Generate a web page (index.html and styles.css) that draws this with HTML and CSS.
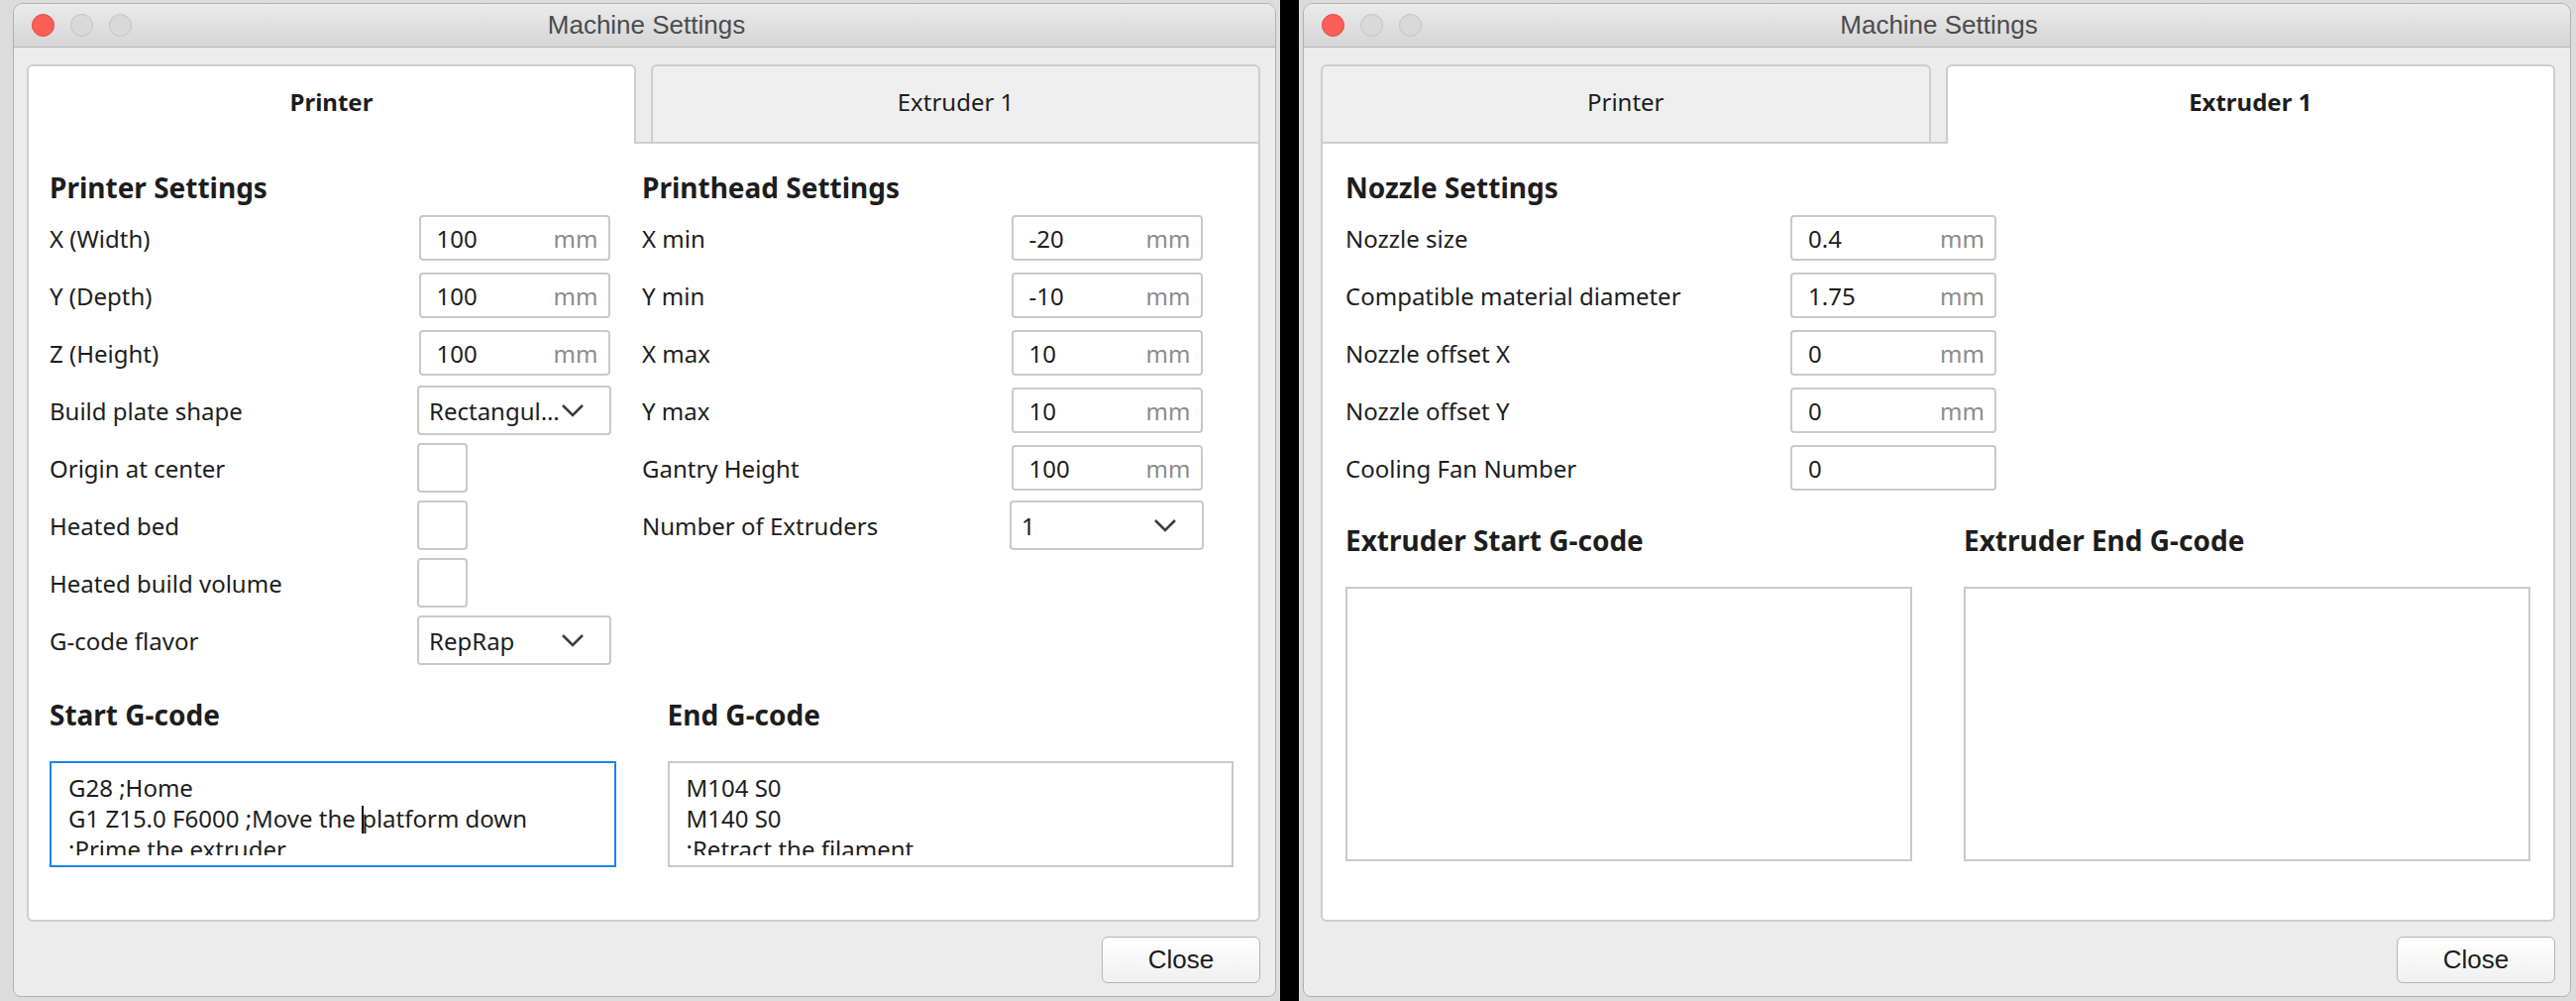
FILE: index.html
```html
<!DOCTYPE html>
<html lang="en">
<head>
  <meta charset="UTF-8" />
  <meta name="viewport" content="width=device-width, initial-scale=1.0"/>
  <title>Machine Settings</title>
  <link rel="stylesheet" href="styles.css">
</head>
<body>
  <!-- Left screenshot: Printer tab -->
  <div class="screen screen-left">
    <div class="window window-left">
      <div class="titlebar">
        <div class="lights">
          <span class="light light-close"></span>
          <span class="light"></span>
          <span class="light"></span>
        </div>
        <div class="title">Machine Settings</div>
      </div>
      <div class="window-body">
        <div class="tabs">
          <div class="tab active">Printer</div>
          <div class="tab">Extruder 1</div>
        </div>
        <div class="panel">
          <div class="settings">
            <div class="column">
              <h2>Printer Settings</h2>
              <div class="row"><span>X (Width)</span><div class="control"><div class="field"><span>100</span><span class="unit">mm</span></div></div></div>
              <div class="row"><span>Y (Depth)</span><div class="control"><div class="field"><span>100</span><span class="unit">mm</span></div></div></div>
              <div class="row"><span>Z (Height)</span><div class="control"><div class="field"><span>100</span><span class="unit">mm</span></div></div></div>
              <div class="row"><span>Build plate shape</span><div class="control"><div class="combo"><span>Rectangul…</span><svg width="24" height="14" viewBox="0 0 24 14"><path d="M2 2 L12 12 L22 2" fill="none" stroke="#3d3d3d" stroke-width="2.6"/></svg></div></div></div>
              <div class="row"><span>Origin at center</span><div class="control control-check"><div class="check"></div></div></div>
              <div class="row"><span>Heated bed</span><div class="control control-check"><div class="check"></div></div></div>
              <div class="row"><span>Heated build volume</span><div class="control control-check"><div class="check"></div></div></div>
              <div class="row"><span>G-code flavor</span><div class="control"><div class="combo"><span>RepRap</span><svg width="24" height="14" viewBox="0 0 24 14"><path d="M2 2 L12 12 L22 2" fill="none" stroke="#3d3d3d" stroke-width="2.6"/></svg></div></div></div>
            </div>
            <div class="column">
              <h2>Printhead Settings</h2>
              <div class="row"><span>X min</span><div class="control"><div class="field"><span>-20</span><span class="unit">mm</span></div></div></div>
              <div class="row"><span>Y min</span><div class="control"><div class="field"><span>-10</span><span class="unit">mm</span></div></div></div>
              <div class="row"><span>X max</span><div class="control"><div class="field"><span>10</span><span class="unit">mm</span></div></div></div>
              <div class="row"><span>Y max</span><div class="control"><div class="field"><span>10</span><span class="unit">mm</span></div></div></div>
              <div class="row"><span>Gantry Height</span><div class="control"><div class="field"><span>100</span><span class="unit">mm</span></div></div></div>
              <div class="row"><span>Number of Extruders</span><div class="control"><div class="combo"><span>1</span><svg width="24" height="14" viewBox="0 0 24 14"><path d="M2 2 L12 12 L22 2" fill="none" stroke="#3d3d3d" stroke-width="2.6"/></svg></div></div></div>
            </div>
          </div>
          <div class="gcode">
            <div>
              <h2>Start G-code</h2>
              <div class="code focused"><div class="code-text">G28 ;Home
G1 Z15.0 F6000 ;Move the <span class="caret"></span>platform down
;Prime the extruder
G92 E0
G1 F200 E3
G92 E0</div></div>
            </div>
            <div>
              <h2>End G-code</h2>
              <div class="code"><div class="code-text">M104 S0
M140 S0
;Retract the filament
G92 E1
G1 E-1 F300
G28 X0 Y0
M84</div></div>
            </div>
          </div>
        </div>
        <div class="footer">
          <button class="btn">Close</button>
        </div>
      </div>
    </div>
  </div>

  <!-- Right screenshot: Extruder 1 tab -->
  <div class="screen screen-right">
    <div class="window window-right">
      <div class="titlebar">
        <div class="lights">
          <span class="light light-close"></span>
          <span class="light"></span>
          <span class="light"></span>
        </div>
        <div class="title">Machine Settings</div>
      </div>
      <div class="window-body">
        <div class="tabs">
          <div class="tab">Printer</div>
          <div class="tab active">Extruder 1</div>
        </div>
        <div class="panel">
          <div class="column column-wide">
            <h2>Nozzle Settings</h2>
            <div class="row"><span>Nozzle size</span><div class="control"><div class="field"><span>0.4</span><span class="unit">mm</span></div></div></div>
            <div class="row"><span>Compatible material diameter</span><div class="control"><div class="field"><span>1.75</span><span class="unit">mm</span></div></div></div>
            <div class="row"><span>Nozzle offset X</span><div class="control"><div class="field"><span>0</span><span class="unit">mm</span></div></div></div>
            <div class="row"><span>Nozzle offset Y</span><div class="control"><div class="field"><span>0</span><span class="unit">mm</span></div></div></div>
            <div class="row"><span>Cooling Fan Number</span><div class="control"><div class="field"><span>0</span></div></div></div>
          </div>
          <div class="gcode">
            <div>
              <h2>Extruder Start G-code</h2>
              <div class="code code-tall"></div>
            </div>
            <div>
              <h2>Extruder End G-code</h2>
              <div class="code code-tall"></div>
            </div>
          </div>
        </div>
        <div class="footer">
          <button class="btn">Close</button>
        </div>
      </div>
    </div>
  </div>
</body>
</html>
```

FILE: styles.css
```css
body {
  margin: 0;
  width: 2600px;
  height: 1010px;
  display: flex;
  overflow: hidden;
  background: #000;
  font-family: "Noto Sans", sans-serif;
  color: #1d1d1d;
}

.screen {
  height: 100%;
  background: #dcdcdc;
}

.screen-left {
  width: 1292px;
}

.screen-right {
  flex: 1;
  margin-left: 19px;
}

/* Window chrome */
.window {
  box-sizing: border-box;
  height: 1003px;
  margin-top: 3px;
  display: flex;
  flex-direction: column;
  background: #ececec;
  border: 1px solid #b1b1b1;
  border-radius: 10px 10px 8px 8px;
  overflow: hidden;
}

.window-left {
  width: 1275px;
  margin-left: 13px;
}

.window-right {
  width: 1280px;
  margin-left: 4px;
}

.titlebar {
  height: 43px;
  flex-shrink: 0;
  display: grid;
  grid-template-columns: 1fr auto 1fr;
  align-items: center;
  padding: 0 14px 0 18px;
  background: linear-gradient(#ebebeb, #d5d5d5);
  border-bottom: 1px solid #b6b6b6;
}

.lights {
  display: flex;
  gap: 16px;
}

.light {
  width: 23px;
  height: 23px;
  box-sizing: border-box;
  border-radius: 50%;
  background: #d9d9d9;
  border: 1px solid #c2c2c2;
}

.light-close {
  background: #fd5e56;
  border-color: #e2463f;
}

.title {
  font-family: "Liberation Sans", sans-serif;
  font-size: 26px;
  color: #4c4c4c;
}

.window-body {
  flex: 1;
  display: flex;
  flex-direction: column;
  padding: 17px 15px 13px 13px;
}

.window-right .window-body {
  padding-left: 17px;
}

/* Tabs */
.tabs {
  height: 78px;
  flex-shrink: 0;
  display: flex;
  align-items: flex-end;
  gap: 15px;
}

.tab {
  flex: 1;
  height: 78px;
  box-sizing: border-box;
  display: flex;
  align-items: center;
  justify-content: center;
  padding-bottom: 5px;
  border: 2px solid #cdcdcd;
  border-bottom: none;
  border-radius: 6px 6px 0 0;
  background: #efefef;
  font-size: 24px;
}

.tab.active {
  position: relative;
  z-index: 1;
  height: 80px;
  margin-bottom: -2px;
  padding-bottom: 7px;
  background: #fff;
  font-weight: 700;
}

.panel {
  flex: 1;
  background: #fff;
  border: 2px solid #cdcdcd;
  border-radius: 0 0 6px 6px;
  padding: 26px 25px 0 21px;
}

.window-right .panel {
  padding: 26px 23px 0 23px;
}

h2 {
  margin: 0;
  font-size: 28px;
  line-height: 36px;
  font-weight: 700;
}

/* Settings rows */
.settings {
  display: grid;
  grid-template-columns: 567px 567px;
  column-gap: 31px;
}

.column h2 {
  margin-bottom: 4px;
}

.column-wide {
  width: 657px;
}

.row {
  height: 58px;
  display: flex;
  align-items: center;
  justify-content: space-between;
  font-size: 24px;
}

.control {
  width: 196px;
  display: flex;
  justify-content: center;
}

.control-check {
  justify-content: flex-start;
}

.column-wide .control {
  width: 208px;
}

.field {
  width: 193px;
  height: 46px;
  box-sizing: border-box;
  display: flex;
  align-items: center;
  justify-content: space-between;
  padding: 0 10px 0 16px;
  border: 2px solid #c9c9c9;
  border-radius: 4px;
  background: #fff;
}

.column-wide .field {
  width: 208px;
}

.unit {
  color: #8c8c8c;
}

.combo {
  width: 196px;
  height: 50px;
  box-sizing: border-box;
  display: flex;
  align-items: center;
  justify-content: space-between;
  padding: 0 25px 0 10px;
  border: 2px solid #c9c9c9;
  border-radius: 4px;
  background: #fff;
}

.check {
  width: 51px;
  height: 50px;
  box-sizing: border-box;
  border: 2px solid #c9c9c9;
  border-radius: 4px;
}

/* G-code boxes */
.gcode {
  display: grid;
  grid-template-columns: 1fr 1fr;
  column-gap: 52px;
  margin-top: 28px;
}

.window-right .gcode {
  margin-top: 26px;
}

.code {
  box-sizing: border-box;
  height: 107px;
  margin-top: 29px;
  padding: 9px 17px 0;
  border: 2px solid #c9c9c9;
  font-size: 24px;
  line-height: 31px;
  overflow: hidden;
}

.code-text {
  height: 84px;
  white-space: pre;
  overflow: hidden;
}

.code.focused {
  border-color: #1b82f1;
}

.code-tall {
  height: 277px;
}

.caret {
  display: inline-block;
  width: 2px;
  height: 28px;
  margin-right: -2px;
  vertical-align: -6px;
  background: #111;
}

/* Footer */
.footer {
  display: flex;
  justify-content: flex-end;
  margin-top: 15px;
}

.btn {
  width: 160px;
  height: 47px;
  border: 1px solid #b3b3b3;
  border-radius: 6px;
  background: linear-gradient(#ffffff, #f0f0f0);
  font-family: "Liberation Sans", sans-serif;
  font-size: 26px;
  color: #1c1c1c;
}
```
